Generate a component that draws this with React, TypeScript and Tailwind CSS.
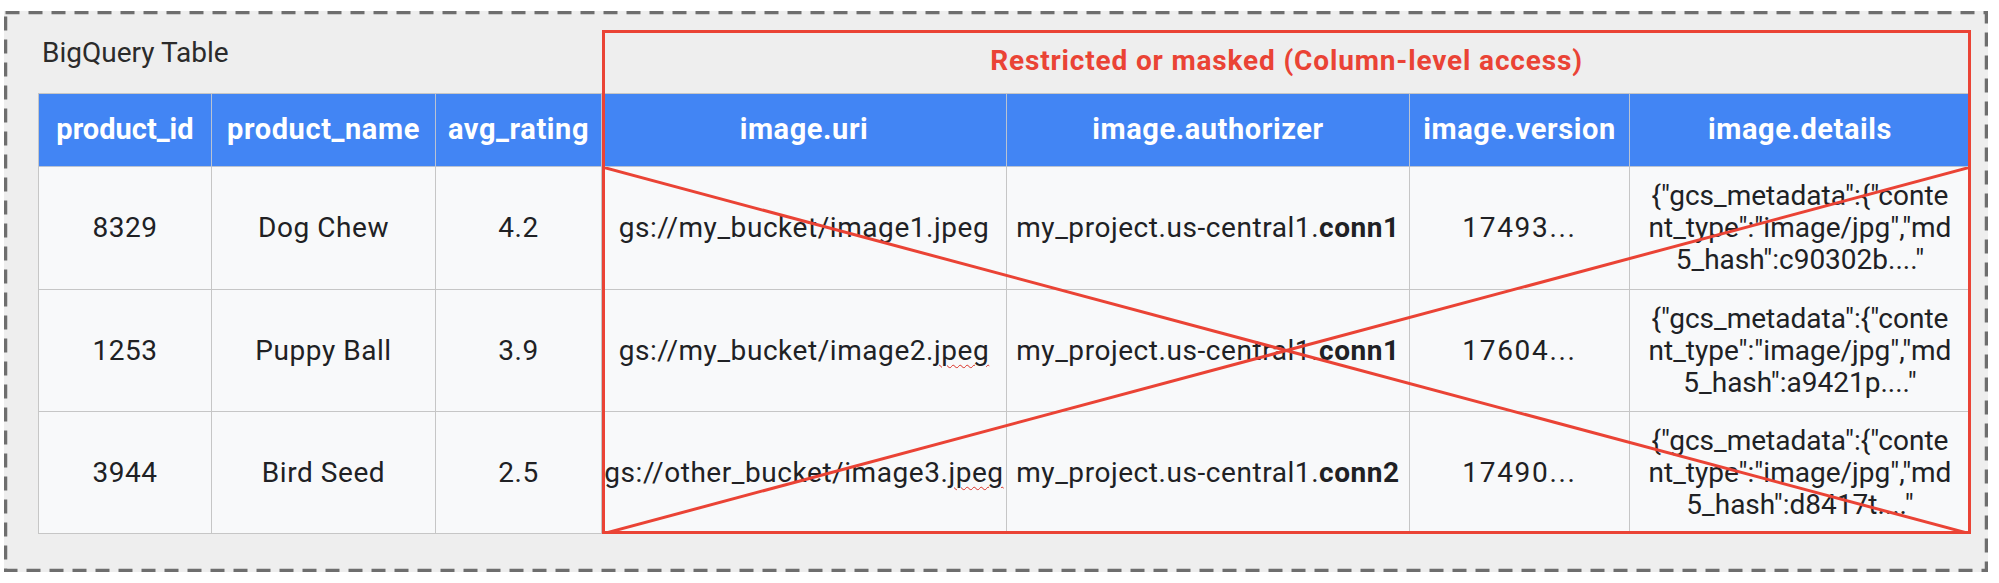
const left = ["product_id", "product_name", "avg_rating"];
const right = ["image.uri", "image.authorizer", "image.version", "image.details"];

const rows = [
  { id: "8329", name: "Dog Chew", rating: "4.2", uri: "gs://my_bucket/image1.", wavy: false, conn: "conn1", version: "17493...", hash: '5_hash":c90302b...."', h: "h-[123px]" },
  { id: "1253", name: "Puppy Ball", rating: "3.9", uri: "gs://my_bucket/image2.", wavy: true, conn: "conn1", version: "17604...", hash: '5_hash":a9421p...."', h: "h-[122px]" },
  { id: "3944", name: "Bird Seed", rating: "2.5", uri: "gs://other_bucket/image3.", wavy: true, conn: "conn2", version: "17490...", hash: '5_hash":d8417t...."', h: "h-[122px]" },
];

const head = "h-[73px] bg-[#4285f4] border-r border-b border-[#b9c3d3] flex items-center justify-center text-white font-bold text-[29px] tracking-[0.02em]";
const cell = "bg-[#f8f9fa] border-r border-b border-[#c6c6c6] flex items-center justify-center text-[28px] tracking-[0.02em] text-[#202124]";

export default function App() {
  return (
    <div className="min-h-screen bg-white pt-[11px] pl-[4px] font-['Roboto',sans-serif]">
      <div className="relative w-[1984px] h-[561px] bg-[#eeeeee] pt-[19px] pl-[34px] flex items-start">
        {/* dashed frame */}
        <svg className="absolute inset-0 pointer-events-none" width="1984" height="561">
          <rect x="1.5" y="1.5" width="1981" height="558" fill="none" stroke="#6e6e6e" strokeWidth="3.5" strokeDasharray="14 9" />
        </svg>

        <div className="w-[564px] flex flex-col">
          <div className="h-[63px] pl-[4px] pt-[5px] text-[28px] leading-[36px] text-[#2b2b2b]">BigQuery Table</div>
          <div className="grid grid-cols-[173px_224px_166px] border-l border-t border-[#c6c6c6]">
            {left.map((c) => (
              <div key={c} className={`${head} ${c === "product_id" ? "tracking-normal" : ""}`}>{c}</div>
            ))}
            {rows.map((r) => (
              <>
                <div key={r.id + "a"} className={`${cell} ${r.h}`}>{r.id}</div>
                <div key={r.id + "b"} className={`${cell} ${r.h}`}>{r.name}</div>
                <div key={r.id + "c"} className={`${cell} ${r.h}`}>{r.rating}</div>
              </>
            ))}
          </div>
        </div>

        <div className="relative w-[1369px] flex flex-col">
          <div className="h-[63px] flex items-center justify-center pb-[2px] text-[28px] tracking-[0.03em] font-bold text-[#ea4335]">
            Restricted or masked (Column-level access)
          </div>
          <div className="relative grid grid-cols-[405px_403px_220px_341px] border-t border-[#c6c6c6]">
            {right.map((c) => (
              <div key={c} className={head}>{c}</div>
            ))}
            {rows.map((r) => (
              <>
                <div key={r.id + "u"} className={`${cell} ${r.h} tracking-[0.01em]`}>
                  <span>
                    {r.uri}
                    {r.wavy ? (
                      <span className="underline decoration-wavy decoration-[#d93025] decoration-1 underline-offset-4">jpeg</span>
                    ) : (
                      "jpeg"
                    )}
                  </span>
                </div>
                <div key={r.id + "v"} className={`${cell} ${r.h} tracking-[0.01em]`}>
                  <span>
                    my_project.us-central1.<b>{r.conn}</b>
                  </span>
                </div>
                <div key={r.id + "w"} className={`${cell} ${r.h} tracking-[0.06em]`}>{r.version}</div>
                <div key={r.id + "x"} className={`${cell} ${r.h} flex-col leading-[32px] tracking-normal`}>
                  <span>{'{"gcs_metadata":{"conte'}</span>
                  <span>{'nt_type":"image/jpg","md'}</span>
                  <span>{r.hash}</span>
                </div>
              </>
            ))}
            <svg className="absolute left-0 right-0 bottom-0 top-[73px] w-full h-[367px] pointer-events-none" viewBox="0 0 100 100" preserveAspectRatio="none">
              <line x1="0" y1="0" x2="100" y2="100" stroke="#ea4335" strokeWidth="3" vectorEffect="non-scaling-stroke" />
              <line x1="0" y1="100" x2="100" y2="0" stroke="#ea4335" strokeWidth="3" vectorEffect="non-scaling-stroke" />
            </svg>
          </div>
          <div className="absolute inset-0 border-[3px] border-[#ea4335] pointer-events-none" />
        </div>
      </div>
    </div>
  );
}
